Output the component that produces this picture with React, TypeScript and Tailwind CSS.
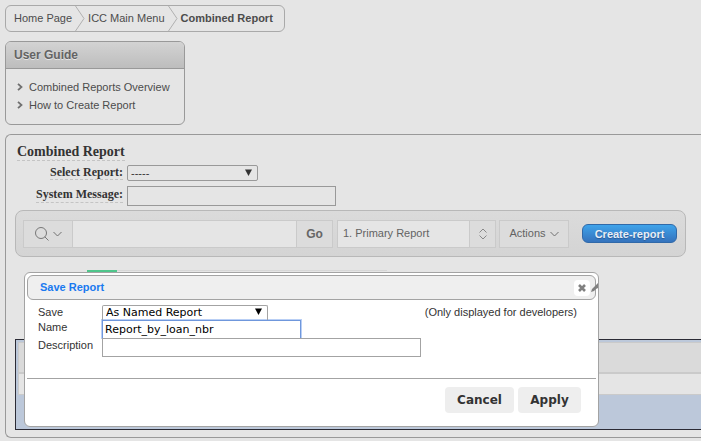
import React from "react";

const sans = "font-['Liberation_Sans',Arial,sans-serif]";
const verdana = "font-['DejaVu_Sans',Verdana,sans-serif]";
const serif = "font-['Liberation_Serif','Times_New_Roman',serif]";

function CrumbArrow() {
  return (
    <svg className="h-[25px] w-[10px] shrink-0" viewBox="0 0 10 25" fill="none" stroke="#b0b0b0">
      <path d="M0.5 0 L9 12.5 L0.5 25" />
    </svg>
  );
}

function Down() {
  return (
    <svg className="h-[6px] w-[9px]" viewBox="0 0 9 6" fill="none" stroke="#707070">
      <path d="M0.5 1 L4.5 5 L8.5 1" />
    </svg>
  );
}

function Triangle({ className = "" }: { className?: string }) {
  return (
    <svg className={`pointer-events-none h-[7px] w-[7px] ${className}`} viewBox="0 0 7 7" fill="currentColor">
      <path d="M0 0.5 H7 L3.5 7 Z" />
    </svg>
  );
}

function Breadcrumb() {
  return (
    <nav className="flex h-[27px] w-[280px] items-center gap-[3px] rounded-md border border-[#a9a9a9] px-2 text-[11px] whitespace-nowrap text-[#4c4c4c]">
      <a href="#home">Home Page</a>
      <CrumbArrow />
      <a href="#menu">ICC Main Menu</a>
      <CrumbArrow />
      <span className="font-bold">Combined Report</span>
    </nav>
  );
}

function GuideLink({ children }: { children: string }) {
  return (
    <li className="flex items-center gap-1.5">
      <svg className="h-[8px] w-[6px]" viewBox="0 0 6 8" fill="none" stroke="#707070" strokeWidth="1.8">
        <path d="M1 0.8 L4.5 4 L1 7.2" />
      </svg>
      <a href="#guide">{children}</a>
    </li>
  );
}

function UserGuide() {
  return (
    <section className="mt-[9px] w-[180px] overflow-hidden rounded-md border border-[#999]">
      <h2 className="h-[27px] border-b border-[#999] bg-linear-to-b from-[#d3d3d3] to-[#bdbdbd] px-2 text-[12px] leading-[26px] font-bold text-[#636363] [text-shadow:0_1px_0_#e6e6e6]">
        User Guide
      </h2>
      <ul className="pt-[9px] pb-[10px] pl-[11px] text-[11px] leading-[18px] text-[#4c4c4c]">
        <GuideLink>Combined Reports Overview</GuideLink>
        <GuideLink>How to Create Report</GuideLink>
      </ul>
    </section>
  );
}

function Toolbar() {
  return (
    <div className="mr-[15px] ml-[9px] flex h-[47px] items-center rounded-lg border border-[#b8b8b8] bg-linear-to-b from-[#dbdbdb] to-[#d4d4d4] px-[7px] text-[11px] text-[#636363]">
      <div className="flex h-[28px] min-w-0 flex-1 border border-[#cacaca]">
        <button aria-label="Search columns" className="flex w-[49px] shrink-0 items-center justify-center gap-1 border-r border-[#cacaca] bg-[#dcdcdc]">
          <svg className="h-[14px] w-[14px]" viewBox="0 0 14 14" fill="none" stroke="#777">
            <circle cx="6" cy="6" r="5.5" />
            <path d="M9.8 9.8 L13.5 13.5" />
          </svg>
          <Down />
        </button>
        <input aria-label="Search" className="min-w-0 flex-1 bg-[#e5e5e5] px-2 outline-none" />
        <button className="w-[36px] shrink-0 border-l border-[#cacaca] bg-[#dcdcdc] text-[12px] font-bold text-[#666]">Go</button>
      </div>
      <div className="relative ml-1 flex h-[28px] w-[159px] shrink-0 border border-[#cacaca]">
        <select aria-label="Saved report" className="w-full appearance-none bg-[#e5e5e5] px-[5px] outline-none">
          <option>1. Primary Report</option>
        </select>
        <span className="pointer-events-none absolute inset-y-0 right-0 flex w-[26px] items-center justify-center border-l border-[#cacaca] bg-[#dcdcdc]">
          <svg className="h-[12px] w-[8px]" viewBox="0 0 8 12" fill="none" stroke="#888">
            <path d="M0.5 4.5 L4 1 L7.5 4.5 M0.5 7.5 L4 11 L7.5 7.5" />
          </svg>
        </span>
      </div>
      <button className="ml-[3px] flex h-[28px] w-[70px] shrink-0 items-center justify-center gap-1 border border-[#cacaca] bg-[#dcdcdc]">
        Actions
        <Down />
      </button>
      <button className="mr-[1px] ml-[13px] h-[19px] w-[95px] shrink-0 rounded-md border border-[#3069a8] bg-linear-to-b from-[#3ea3ea] to-[#3573bd] text-[11px] leading-[16px] font-bold text-[#e8eef5] [text-shadow:0_1px_1px_#2a5a95]">
        Create-report
      </button>
    </div>
  );
}

function SaveDialog() {
  return (
    <div role="dialog" aria-label="Save Report" className="absolute top-0 left-[18px] w-[575px] rounded-md border border-[#a3a3a3] bg-white px-[2px] pt-[2px] text-[11px] text-[#333]">
      <header className="flex h-[25px] items-center rounded-md border border-[#a3a3a3] bg-[#efefef] pr-[5px] pl-3">
        <h2 className="flex-1 font-bold text-[#1a7af0]">Save Report</h2>
        <button aria-label="Close" className="flex h-4 w-4 items-center justify-center rounded-sm bg-white">
          <svg className="h-[8px] w-[8px]" viewBox="0 0 8 8" stroke="#808080" strokeWidth="2.6">
            <path d="M1 1 L7 7 M7 1 L1 7" />
          </svg>
        </button>
      </header>
      <svg className="absolute top-[10px] right-0 h-[9px] w-[7px]" viewBox="0 0 7 9" fill="#808080">
        <path d="M7 0 V5 L5 6 L3 8 L0 9 L1 6 Z" />
      </svg>
      <form className="grid grid-cols-[64px_1fr] pt-[5px] pl-[11px]">
        <label htmlFor="save-as" className="leading-[15px]">Save</label>
        <div className="flex h-[15px] justify-between">
          <div className="relative h-[15px] w-[166px]">
            <select id="save-as" className={`block h-[15px] w-full appearance-none rounded-t-xs border border-b-0 border-[#a3a3a3] pl-[3px] text-[11px] leading-[14px] text-black outline-none ${verdana}`}>
              <option>As Named Report</option>
            </select>
            <Triangle className="absolute top-[3px] right-[6px] text-black" />
          </div>
          <span className="mr-[19px] leading-[15px]">(Only displayed for developers)</span>
        </div>
        <label htmlFor="save-name" className="leading-[15px]">Name</label>
        <input id="save-name" defaultValue="Report_by_loan_nbr" className={`h-[18px] w-[199px] border border-b-0 border-[#6f97dc] px-[2px] text-[11px] text-black ring-1 ring-[#b9cff5] outline-none ${verdana}`} />
        <label htmlFor="save-desc" className="leading-[15px]">Description</label>
        <input id="save-desc" className={`relative h-[19px] w-[319px] border border-[#a3a3a3] bg-white px-[2px] text-[11px] outline-none ${verdana}`} />
      </form>
      <footer className={`mt-[21px] flex h-[48px] justify-end gap-1 border-t border-[#a3a3a3] pt-2 pr-[15px] text-[12px] font-bold ${verdana}`}>
        <button className="h-[26px] w-[69px] rounded bg-[#eee]">Cancel</button>
        <button className="h-[26px] w-[63px] rounded bg-[#eee]">Apply</button>
      </footer>
    </div>
  );
}

export default function App() {
  return (
    <div className={`overflow-hidden bg-[#e5e5e5] pt-[5px] pb-1 pl-[5px] ${sans}`}>
      <Breadcrumb />
      <UserGuide />
      <main className="mt-[9px] rounded-l-md border border-r-0 border-[#999]">
        <div className={`font-bold text-[#333] ${serif}`}>
          <h1 className="mt-[9px] ml-[11px] w-fit border-b border-dashed border-[#c4c4c4] text-[14px] leading-[16px]">Combined Report</h1>
          <div className="mt-[4px] flex h-[17px]">
            <div className="w-[121px] pt-px pr-1 text-right text-[12px] leading-[13px]">
              <label htmlFor="report" className="inline-block border-b border-dashed border-[#c4c4c4]">Select Report:</label>
            </div>
            <div className="relative h-[16px] w-[131px]">
              <select id="report" className={`block h-[16px] w-full appearance-none rounded-xs border border-[#999] pl-[3px] text-[11px] leading-[13px] font-normal outline-none ${sans}`}>
                <option>-----</option>
              </select>
              <Triangle className="absolute top-[4px] right-[6px]" />
            </div>
          </div>
          <div className="mt-[4px] flex h-[24px]">
            <div className="w-[121px] pt-px pr-1 text-right text-[12px] leading-[15px]">
              <label htmlFor="message" className="inline-block border-b border-dashed border-[#c4c4c4]">System Message:</label>
            </div>
            <input id="message" className={`h-[20px] w-[209px] border border-[#999] px-1 text-[11px] font-normal outline-none ${sans}`} />
          </div>
        </div>
        <Toolbar />
        <div className="mt-[13px] ml-[81px] flex h-[2px] w-[300px]">
          <div className="w-[30px] bg-[#4fc58b]" />
          <div className="flex-1 border-t border-[#d6d6d6]" />
        </div>
        <div className="relative pt-[67px] pb-[7px]">
          <div className="ml-[9px] h-[91px] border border-r-0 border-[#2b2b35] bg-[#bcc8da] pt-[2px] pl-[2px]">
            <div className="h-[32px] border border-r-0 border-b-2 border-[#cacaca] bg-[#dadada]" />
            <div className="h-[21px] border border-t-0 border-r-0 border-[#cacaca] bg-[#e5e5e5]" />
          </div>
          <SaveDialog />
        </div>
      </main>
    </div>
  );
}
